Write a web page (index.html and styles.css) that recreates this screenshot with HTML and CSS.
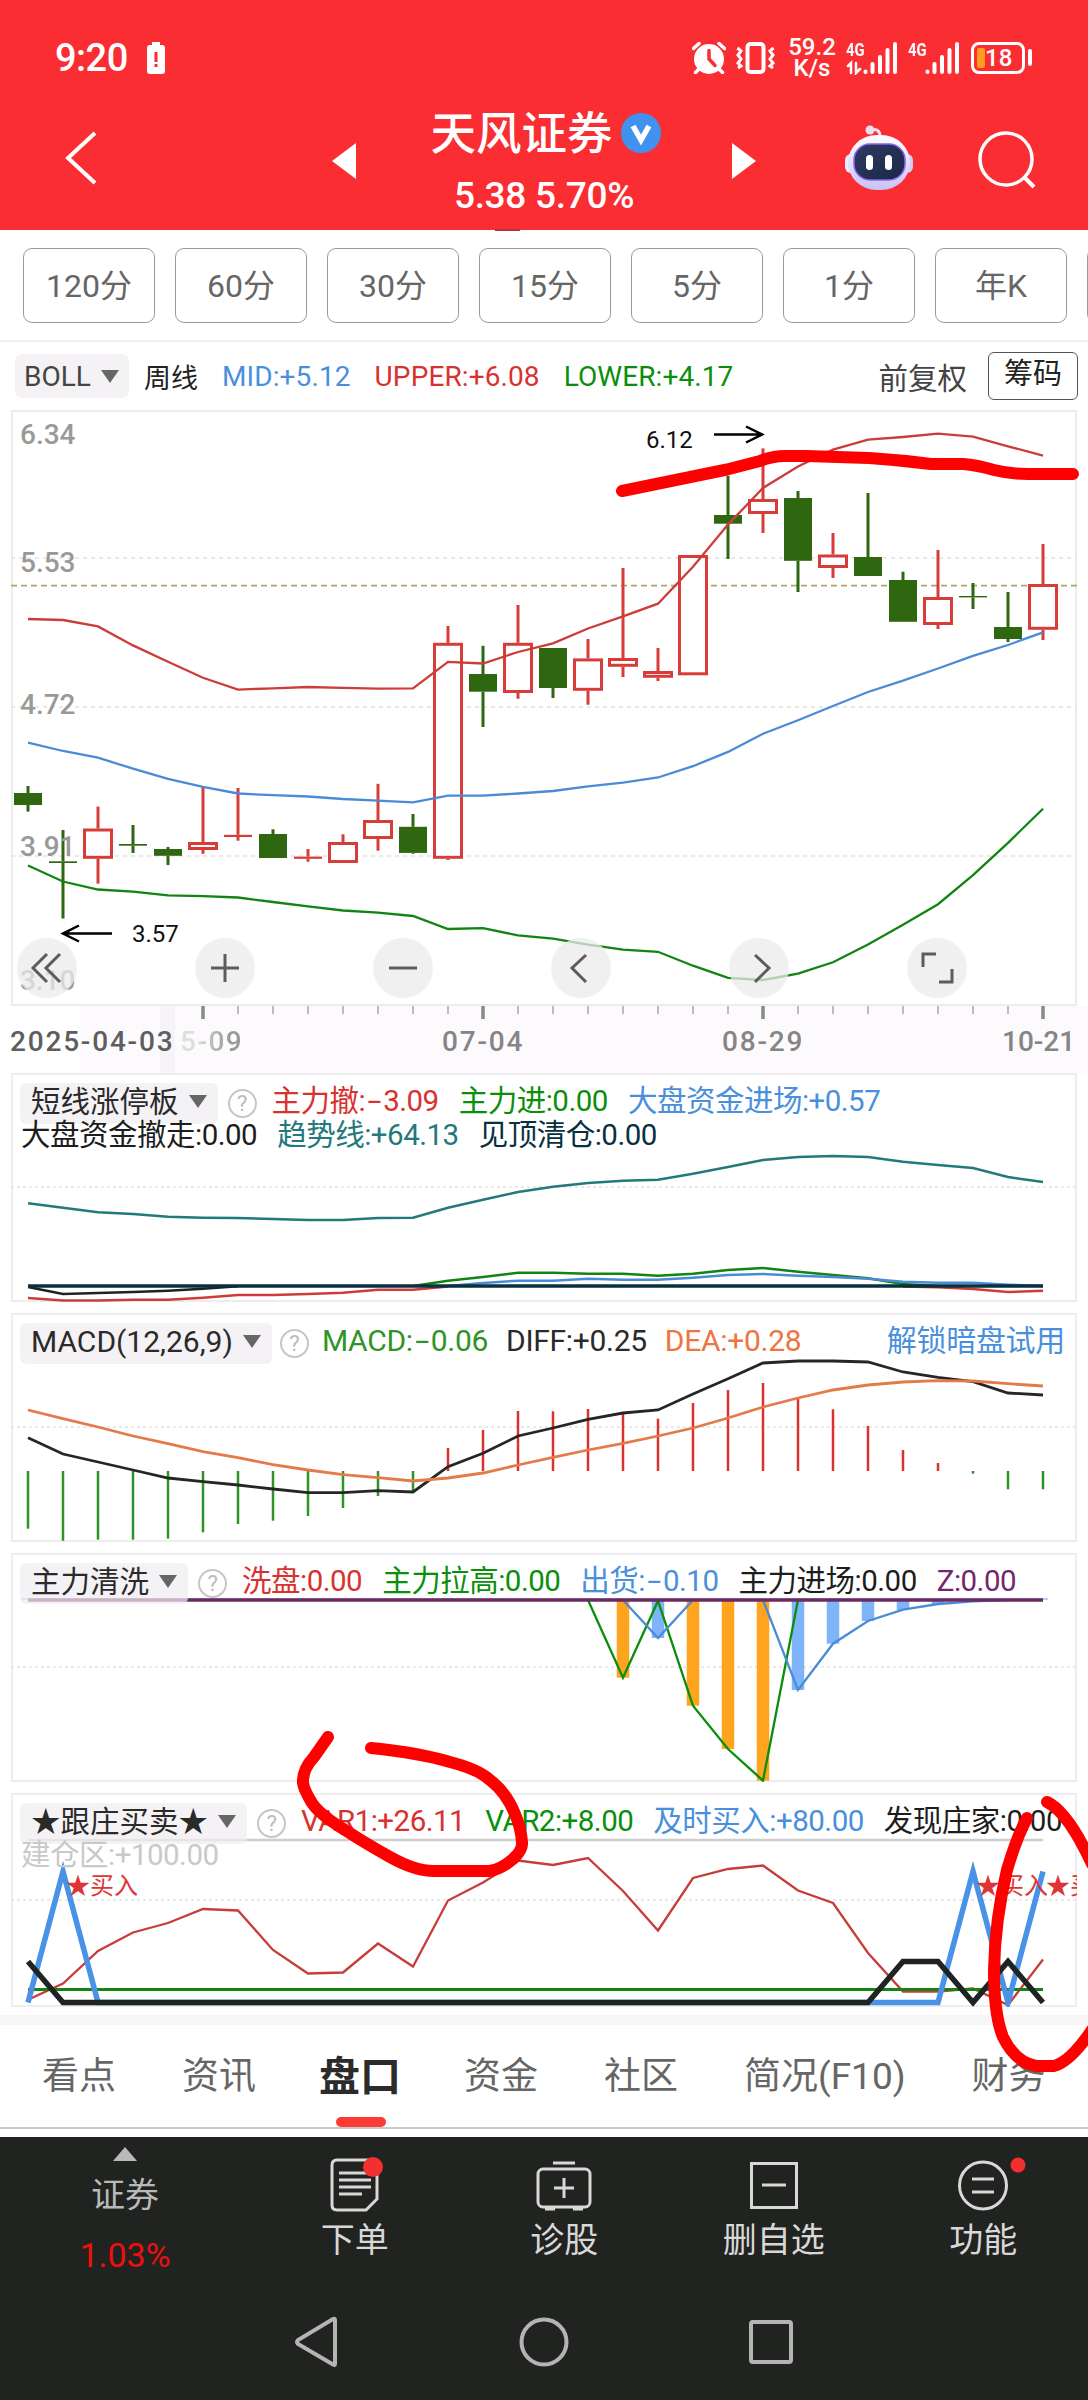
FILE: index.html
```html
<!DOCTYPE html>
<html lang="zh-CN">
<head>
    <meta charset="UTF-8">
    <meta name="viewport" content="width=device-width, initial-scale=1.0">
    <title>天风证券 - 周线</title>
    <link rel="stylesheet" href="styles.css">
</head>
<body>

    <header class="header">
        <!-- 状态栏 -->
        <div class="status-bar">
            <span class="clock">9:20</span>
            <svg class="low-battery" width="18" height="32" viewBox="0 0 18 32">
                <rect x="5" y="0" width="8" height="3" fill="#fff"/>
                <rect x="0" y="3" width="18" height="29" rx="3" fill="#fff"/>
                <rect x="7.5" y="10" width="3" height="10" fill="#fa2d33"/>
                <rect x="7.5" y="22" width="3" height="3" fill="#fa2d33"/>
            </svg>
            <div class="status-right">
                <svg width="34" height="32" viewBox="0 0 34 32">
                    <circle cx="17" cy="17" r="15" fill="#fff"/>
                    <path d="M1.500 6.500L7 1.500M32.500 6.500L27 1.500M7 27L3.500 30.500M27 27L30.500 30.500" stroke="#fff" stroke-width="3.500" stroke-linecap="round"/>
                    <path d="M17 8.500V17L23 23.500" fill="none" stroke="#fa2d33" stroke-width="3.500" stroke-linecap="round"/>
                </svg>
                <svg class="vibrate" width="40" height="32" viewBox="0 0 40 32" fill="none" stroke="#fff">
                    <rect x="11.500" y="2" width="16" height="28" rx="3" stroke-width="4"/>
                    <path d="M1.500 6L5 9L2 13L5 17L2 21L5 24L2 26M37.500 6L34 9L37 13L34 17L37 21L34 24L37 26" stroke-width="3"/>
                </svg>
                <div class="speed"><span>59.2</span><span>K/s</span></div>
                <div class="signal">
                    <span class="net">4G</span>
                    <svg width="53" height="34" viewBox="0 0 53 34" fill="none" stroke="#fff" stroke-linecap="round">
                        <path d="M2 25L5 22V32M10 22V32L14 28" stroke-width="2.500"/>
                        <path d="M19.500 30.500V31M26.500 23V31M34 16V31M41.500 9V31M49 3V31" stroke-width="4"/>
                    </svg>
                </div>
                <div class="signal second">
                    <span class="net">4G</span>
                    <svg width="53" height="34" viewBox="0 0 53 34" fill="none" stroke="#fff" stroke-linecap="round">
                        <path d="M19.500 30.500V31M26.500 23V31M34 16V31M41.500 9V31M49 3V31" stroke-width="4"/>
                    </svg>
                </div>
                <div class="battery"><i></i><span>18</span></div>
                <span class="battery-nub"></span>
            </div>
        </div>

        <!-- 标题栏 -->
        <div class="title-bar">
            <svg class="back" width="34" height="56" viewBox="0 0 34 56"><path d="M31 3L4 28L31 53" fill="none" stroke="#fff" stroke-width="4"/></svg>
            <svg class="prev" width="24" height="36" viewBox="0 0 24 36"><path d="M24 0V36L0 18Z" fill="#fff"/></svg>
            <div class="stock">
                <div class="stock-name">天风证券
                    <svg width="40" height="40" viewBox="0 0 40 40"><circle cx="20" cy="20" r="20" fill="#4191ee"/><path d="M12 13L20 27L28 13" fill="none" stroke="#fff" stroke-width="5.500"/></svg>
                </div>
                <div class="stock-price">5.38 5.70%</div>
            </div>
            <svg class="next" width="24" height="36" viewBox="0 0 24 36"><path d="M0 0V36L24 18Z" fill="#fff"/></svg>
            <svg class="robot" width="70" height="66" viewBox="0 0 70 66">
                <defs>
                    <linearGradient id="shell" x1="0" y1="0" x2="0" y2="1"><stop offset="0" stop-color="#fff"/><stop offset="1" stop-color="#c6c2f7"/></linearGradient>
                    <linearGradient id="face" x1="0" y1="0" x2="1" y2="1"><stop offset="0" stop-color="#2f3a63"/><stop offset="1" stop-color="#1b2745"/></linearGradient>
                </defs>
                <path d="M26 5C33 3 36 6 36 12" fill="none" stroke="#f3dff0" stroke-width="3"/>
                <circle cx="26" cy="5" r="4.500" fill="#f0dcf0"/>
                <rect x="1" y="29" width="12" height="19" rx="6" fill="#efeafc"/>
                <rect x="57" y="29" width="12" height="19" rx="6" fill="#d5cdf8"/>
                <rect x="4" y="10" width="62" height="55" rx="29" fill="url(#shell)"/>
                <rect x="10" y="19" width="51" height="36" rx="16" fill="url(#face)" stroke="#8a63f0" stroke-width="1.500"/>
                <rect x="22" y="30" width="7" height="15" rx="3.500" fill="#fff"/>
                <rect x="41" y="30" width="7" height="15" rx="3.500" fill="#fff"/>
            </svg>
            <svg class="search" width="60" height="60" viewBox="0 0 60 60" fill="none" stroke="#fff">
                <circle cx="28" cy="29" r="26" stroke-width="3.500"/>
                <path d="M46 47L56 57" stroke-width="4"/>
            </svg>
        </div>
        <span class="header-mark"></span>
    </header>

    <!-- 周期选择 -->
    <nav class="periods">
        <span>120分</span>
        <span>60分</span>
        <span>30分</span>
        <span>15分</span>
        <span>5分</span>
        <span>1分</span>
        <span>年K</span>
        <span></span>
    </nav>

    <div class="main-legend">
        <span class="chip boll">BOLL<i class="caret"></i></span>
        <span class="week">周线</span>
        <span class="val blue">MID:+5.12</span>
        <span class="val red">UPPER:+6.08</span>
        <span class="val green">LOWER:+4.17</span>
        <span class="fuquan">前复权</span>
        <span class="chouma">筹码</span>
    </div>

    <!-- K线主图 -->
    <section class="panel main-chart">
        <svg id="kline" class="plot" width="1066" height="596" viewBox="11 410 1066 596"></svg>
        <div class="scale">
            <span>6.34</span>
            <span>5.53</span>
            <span>4.72</span>
            <span>3.91</span>
            <span>3.10</span>
        </div>
        <div class="controls">
            <span><svg viewBox="0 0 60 60"><path d="M30 16L16 30L30 44M43 16L29 30L43 44"/></svg></span>
            <span><svg viewBox="0 0 60 60"><path d="M16 30H44M30 16V44"/></svg></span>
            <span><svg viewBox="0 0 60 60"><path d="M16 30H44"/></svg></span>
            <span><svg viewBox="0 0 60 60"><path d="M35 17L21 30L35 44"/></svg></span>
            <span><svg viewBox="0 0 60 60"><path d="M26 17L40 30L26 44"/></svg></span>
            <span><svg viewBox="0 0 60 60"><path d="M16 29V16H29M32 44H45V31"/></svg></span>
        </div>
    </section>

    <div class="axis">
        <svg id="ticks" width="1088" height="14" viewBox="0 0 1088 14"></svg>
        <div class="dates">
            <span class="d-start">2025-04-03</span>
            <span class="d-covered">5-09</span>
            <span class="d-jul">07-04</span>
            <span class="d-aug">08-29</span>
            <span class="d-oct">10-21</span>
        </div>
    </div>

    <!-- 指标副图 -->
    <section class="panel">
        <svg id="duanxian" class="plot" width="1066" height="229" viewBox="11 0 1066 229"></svg>
        <div class="legend">
            <span class="chip">短线涨停板<i class="caret"></i></span><i class="help">?</i>
            <span class="red">主力撤:<i class="minus">-</i>3.09</span>
            <span class="green">主力进:0.00</span>
            <span class="blue">大盘资金进场:+0.57</span>
        </div>
        <div class="legend row2">
            <span class="black">大盘资金撤走:0.00</span>
            <span class="teal">趋势线:+64.13</span>
            <span class="navy">见顶清仓:0.00</span>
        </div>
    </section>

    <section class="panel">
        <svg id="macd" class="plot" width="1066" height="229" viewBox="11 0 1066 229"></svg>
        <div class="legend latin">
            <span class="chip">MACD(12,26,9)<i class="caret"></i></span><i class="help">?</i>
            <span class="leaf">MACD:<i class="minus">-</i>0.06</span>
            <span class="dark">DIFF:+0.25</span>
            <span class="orange">DEA:+0.28</span>
            <span class="blue unlock">解锁暗盘试用</span>
        </div>
    </section>

    <section class="panel">
        <svg id="qingxi" class="plot" width="1066" height="229" viewBox="11 0 1066 229"></svg>
        <div class="legend">
            <span class="chip">主力清洗<i class="caret"></i></span><i class="help">?</i>
            <span class="red">洗盘:0.00</span>
            <span class="green">主力拉高:0.00</span>
            <span class="blue">出货:<i class="minus">-</i>0.10</span>
            <span class="black">主力进场:0.00</span>
            <span class="purple">Z:0.00</span>
        </div>
    </section>

    <section class="panel short">
        <svg id="genzhuang" class="plot" width="1066" height="214" viewBox="11 0 1066 214"></svg>
        <div class="legend">
            <span class="chip">★跟庄买卖★<i class="caret"></i></span><i class="help">?</i>
            <span class="red">VAR1:+26.11</span>
            <span class="green">VAR2:+8.00</span>
            <span class="blue">及时买入:+80.00</span>
            <span class="black">发现庄家:0.00</span>
        </div>
        <div class="legend row2">
            <span class="pale">建仓区:+100.00</span>
        </div>
    </section>

    <!-- 内容标签 -->
    <nav class="tabs">
        <span>看点</span>
        <span>资讯</span>
        <span class="active">盘口</span>
        <span>资金</span>
        <span>社区</span>
        <span>简况(F10)</span>
        <span>财务</span>
    </nav>

    <!-- 底部工具栏 -->
    <footer class="footer">
        <div class="tools">
            <div class="tool index">
                <i class="up"></i>
                <span>证券</span>
                <b>1.03%</b>
            </div>
            <div class="tool">
                <svg width="60" height="56" viewBox="0 0 60 56" fill="none" stroke="#d8d8d8" stroke-width="3">
                    <path d="M12 3H46Q52 3 52 9V42L41 53H12Q7 53 7 48V8Q7 3 12 3Z"/>
                    <path d="M14 16H44M14 23H46M14 30H46M14 37H37"/>
                    <circle cx="48" cy="10" r="10" fill="#f23030" stroke="none"/>
                </svg>
                <span>下单</span>
            </div>
            <div class="tool">
                <svg width="60" height="56" viewBox="0 0 60 56" fill="none" stroke="#d8d8d8" stroke-width="3">
                    <rect x="4" y="12" width="52" height="38" rx="5"/>
                    <path d="M19 6H41M30 21V41M20 31H40M11 52H21M39 52H49"/>
                </svg>
                <span>诊股</span>
            </div>
            <div class="tool">
                <svg width="60" height="56" viewBox="0 0 60 56" fill="none" stroke="#d8d8d8" stroke-width="3">
                    <rect x="7.500" y="6.500" width="45" height="44"/>
                    <path d="M18 28H42"/>
                </svg>
                <span>删自选</span>
            </div>
            <div class="tool">
                <svg class="wide" width="88" height="56" viewBox="-14 0 88 56" fill="none" stroke="#d8d8d8" stroke-width="3">
                    <circle cx="30" cy="28.500" r="23.500"/>
                    <path d="M19 22H41M19 35H41"/>
                    <circle cx="65" cy="8" r="7.500" fill="#f23030" stroke="none"/>
                </svg>
                <span>功能</span>
            </div>
        </div>
        <div class="sysnav">
            <svg width="48" height="54" viewBox="0 0 48 54"><path d="M42 5V49Q42 51 40 49.500L5 29Q3 27 5 25L40 4Q42 3 42 5Z"/></svg>
            <svg width="54" height="54" viewBox="0 0 54 54"><circle cx="27" cy="27" r="22.500"/></svg>
            <svg width="48" height="54" viewBox="0 0 48 54"><rect x="4" y="7" width="40" height="40" rx="2"/></svg>
        </div>
    </footer>

    <!-- 手绘标注 -->
    <svg class="marker" width="1088" height="2400" viewBox="0 0 1088 2400">
        <path d="M622 491L727 469.500L760 461Q772 456 785 456L806 456L869 458Q900 460 931 464L963 464Q977 465 994 470Q1010 474 1028 474L1073 474"/>
        <path d="M328 1737L314 1757Q302 1770 303 1783Q304 1790 312 1803Q320 1815 345 1830Q365 1843 390 1857Q415 1871 434 1871H489Q500 1870 513 1859Q523 1850 522 1842Q521 1828 515 1814Q506 1792 490 1780Q478 1769 450 1762Q420 1753 371 1748"/>
        <path d="M1027 1818Q1017 1836 1007 1870Q995 1920 994 1970Q994 2015 1003 2037Q1015 2062 1036 2066H1054Q1070 2062 1092 2030M1047 1802Q1068 1812 1092 1864"/>
    </svg>

    <script src="chart.js"></script>
</body>
</html>
```
FILE: styles.css
```css
* {
    box-sizing: border-box;
}

body {
    margin: 0;
    width: 1088px;
    height: 2400px;
    position: relative;
    overflow: hidden;
    background-color: #fff;
    color: #222;
    font-family: Roboto, "Noto Sans CJK SC", sans-serif;
}

i, b {
    font-style: normal;
    font-weight: normal;
}

svg {
    display: block;
    flex: none;
}

.red { color: #d8322f; }
.green { color: #0a8f0a; }
.blue { color: #4a8fdc; }
.black { color: #1d1d1d; }
.dark { color: #2a2a2a; }
.teal { color: #23797c; }
.navy { color: #08303f; }
.leaf { color: #2f9426; }
.orange { color: #ee7440; }
.purple { color: #74256e; }
.pale { color: #c9c9c9; }

/* 顶部 */
.header {
    position: relative;
    height: 230px;
    background-color: #fa2d33;
    color: #fff;
}

.status-bar {
    display: flex;
    align-items: center;
    height: 86px;
    padding: 29px 56px 0 55px;
}

.clock {
    font-size: 38px;
    font-weight: 500;
    letter-spacing: -0.5px;
    width: 92px;
}

.status-right {
    display: flex;
    align-items: center;
    margin-left: auto;
}

.vibrate {
    margin-left: 10px;
}

.speed {
    display: flex;
    flex-direction: column;
    align-items: center;
    width: 46px;
    margin: 0 11px 0 13px;
    font-size: 24px;
    font-weight: 500;
    line-height: 21px;
}

.signal {
    display: grid;
}

.signal > * {
    grid-area: 1 / 1;
}

.signal.second {
    margin: 0 10px 0 9px;
}

.net {
    font-size: 19px;
    line-height: 17px;
    font-weight: 700;
    transform: scaleX(0.78);
    transform-origin: left;
}

.battery {
    display: flex;
    align-items: center;
    width: 54px;
    height: 32px;
    padding-left: 3px;
    border: 3px solid #fff;
    border-radius: 8px;
    font-size: 24px;
    font-weight: 500;
}

.battery i {
    width: 8px;
    height: 20px;
    border-radius: 2px;
    background-color: #ff9c1c;
}

.battery-nub {
    width: 4px;
    height: 17px;
    margin-left: 3px;
    border-radius: 2px;
    background-color: #fff;
}

.title-bar {
    display: flex;
    height: 144px;
    padding-left: 64px;
}

.back {
    margin-top: 44px;
}

.prev {
    margin: 57px 0 0 234px;
}

.stock {
    width: 376px;
    text-align: center;
}

.stock-name {
    display: flex;
    justify-content: center;
    align-items: center;
    gap: 8px;
    height: 66px;
    margin-top: 12px;
    padding-left: 3px;
    padding-bottom: 2px;
    font-size: 45.5px;
    font-weight: 500;
}

.stock-name svg {
    margin-top: 5px;
}

.stock-price {
    margin-top: 2px;
    font-size: 37px;
    font-weight: 500;
    line-height: 60px;
    letter-spacing: -0.3px;
}

.next {
    margin-top: 57px;
}

.robot {
    margin: 39px 0 0 88px;
}

.search {
    margin: 44px 0 0 64px;
}

.header-mark {
    position: absolute;
    left: 495px;
    bottom: -1px;
    width: 25px;
    height: 2px;
    background-color: #b8343a;
}

/* 周期 */
.periods {
    display: flex;
    gap: 20px;
    height: 112px;
    padding: 18px 0 0 23px;
    border-bottom: 2px solid #efefef;
    overflow: hidden;
}

.periods span {
    flex: none;
    width: 132px;
    height: 75px;
    border: 1.5px solid #9a9a9a;
    border-radius: 9px;
    color: #666;
    font-size: 32px;
    line-height: 74px;
    text-align: center;
}

.chip {
    display: flex;
    align-items: center;
    height: 41px;
    padding: 0 11px;
    border-radius: 6px;
    background-color: rgba(241, 236, 241, 0.7);
    color: #2a2a2a;
    letter-spacing: 0;
}

.caret {
    margin-left: 10px;
    border: 9px solid transparent;
    border-top: 13px solid #666;
    border-bottom: 0;
}

.main-legend {
    display: flex;
    align-items: center;
    height: 68px;
    padding: 0 10px 0 15px;
    font-size: 28px;
}

.main-legend .chip {
    height: 44px;
    padding: 0 9px;
    width: 114px;
    margin-right: 15px;
    color: #444;
}

.week {
    width: 78px;
    font-size: 27px;
}

.val {
    margin-right: 24px;
    letter-spacing: 0.1px;
}

.fuquan {
    margin-left: auto;
    margin-right: 21px;
    color: #444;
    font-size: 29.5px;
}

.chouma {
    width: 90px;
    height: 48px;
    border: 1.5px solid #555;
    border-radius: 6px;
    font-size: 29px;
    line-height: 43px;
    text-align: center;
}

/* 图表 */
.panel {
    display: grid;
    grid-template-columns: 1066px;
    position: relative;
    width: 1066px;
    height: 229px;
    margin: 0 0 11px 11px;
    overflow: hidden;
    background-color: #fff;
    box-shadow: inset 0 0 0 2px #ededed;
}

.panel > * {
    grid-area: 1 / 1;
}

.main-chart {
    height: 596px;
    margin-bottom: 0;
}

.panel.short {
    height: 214px;
    margin-bottom: 8px;
}

.scale {
    display: flex;
    flex-direction: column;
    gap: 108px;
    padding: 8px 9px 0;
    color: #999;
    font-size: 28px;
    font-weight: 500;
    line-height: 34px;
}

.scale span:first-child {
    margin-bottom: -14px;
}

.scale span:last-child {
    margin-top: -8px;
}

.controls {
    display: flex;
    align-self: end;
    gap: 118px;
    padding: 0 0 8px 6px;
}

.controls span {
    width: 60px;
    height: 60px;
    border-radius: 50%;
    background-color: rgba(235, 235, 235, 0.75);
}

.controls path {
    fill: none;
    stroke: #5c5c5c;
    stroke-width: 3;
}

.axis {
    height: 67px;
    background: linear-gradient(#fff, #fff) 0 0 / 80px 100% no-repeat, linear-gradient(#f7f4f7, #f7f4f7) 160px 0 / 15px 100% no-repeat, #fdfafd;
}

.dates {
    display: flex;
    padding-left: 10px;
    color: #858585;
    font-size: 28px;
    font-weight: 500;
    line-height: 44px;
    white-space: nowrap;
}

.d-start {
    width: 170px;
    color: #5e5e5e;
    letter-spacing: 1.8px;
}

.d-covered {
    width: 262px;
    letter-spacing: 1.5px;
    background: linear-gradient(90deg, #ddd 15px, #999 50px);
    background-clip: text;
    color: transparent;
}

.d-jul, .d-aug {
    width: 280px;
    letter-spacing: 1.8px;
}

.legend {
    display: flex;
    align-items: center;
    gap: 20px;
    height: 42px;
    margin-top: 9px;
    padding: 0 12px 0 9px;
    font-size: 29.5px;
    line-height: 36px;
    letter-spacing: -0.5px;
    white-space: nowrap;
}

.legend > span:not(.chip) {
    padding-bottom: 4px;
}

.legend .chip {
    padding-bottom: 3px;
}

.legend.latin {
    gap: 18px;
    font-size: 30px;
    letter-spacing: -0.3px;
}

.legend.row2 {
    margin-top: 43px;
    padding-left: 10px;
}

.minus {
    display: inline-block;
    width: 18px;
    text-align: center;
    transform: scaleX(1.7);
}

.help {
    flex: none;
    width: 29px;
    height: 29px;
    margin: 0 -5px 0 -10px;
    border: 2px solid #c6c6c6;
    border-radius: 50%;
    color: #bbb;
    font-size: 22px;
    line-height: 25px;
    text-align: center;
}

.unlock {
    margin-left: auto;
}

.buy {
    fill: #e03434;
    font-size: 24px;
}

.extreme {
    fill: #111;
    font-size: 24px;
}

/* 标签 */
.tabs {
    display: flex;
    align-items: center;
    gap: 66px;
    height: 114px;
    padding: 0 0 6px 42px;
    border-top: 10px solid #f6f6f6;
    border-bottom: 2px solid #c9c9c9;
    color: #666;
    font-size: 37px;
    white-space: nowrap;
}

.tabs .active {
    position: relative;
    margin: 0 -3px;
    color: #2b2b2b;
    font-size: 41px;
    font-weight: 700;
}

.tabs .active::after {
    content: "";
    position: absolute;
    left: 17px;
    bottom: -24px;
    width: 50px;
    height: 10px;
    border-radius: 5px;
    background-color: #fb3b35;
}

/* 底部 */
.footer {
    height: 264px;
    margin-top: 8px;
    background-color: #20231f;
    color: #d8d8d8;
}

.tools {
    display: flex;
    height: 150px;
}

.tool {
    display: flex;
    flex-direction: column;
    align-items: center;
    width: 209.5px;
    padding-top: 20px;
    font-size: 34px;
    line-height: 54px;
}

.tool.index {
    width: 250px;
    padding-top: 10px;
    color: #b9b9b9;
}

.up {
    margin-bottom: 7px;
    border: 12px solid transparent;
    border-top: 0;
    border-bottom: 14px solid #b9b9b9;
}

.tool b {
    margin-top: 6px;
    color: #ee0f0f;
}

.sysnav {
    display: flex;
    justify-content: center;
    gap: 176px;
    padding-top: 28px;
}

.sysnav svg {
    fill: none;
    stroke: #b4b4b4;
    stroke-width: 4;
}

.marker {
    position: absolute;
    left: 0;
    top: 0;
    fill: none;
    stroke: #fe0000;
    stroke-width: 12;
    stroke-linecap: round;
    stroke-linejoin: round;
}
```
FILE: chart.js
```js
const RED = '#d83c38';
const GREEN = '#2f6610';
const STEP = 35;
const x = i => 28 + STEP * i;
const el = id => document.getElementById(id);

function add(id, markup) {
    el(id).insertAdjacentHTML('beforeend', markup);
}

// 从第 from 根K线开始画折线
function line(id, color, width, data, from = 0) {
    const pts = data.map((v, k) => `${x(from + k)},${v}`).join(' ');
    add(id, `<polyline points="${pts}" fill="none" stroke="${color}" stroke-width="${width}"/>`);
}

function grid(id, y, dash = '4 4') {
    add(id, `<line x1="11" y1="${y}" x2="1077" y2="${y}" stroke="#e2e2e2" stroke-width="1.5" stroke-dasharray="${dash}"/>`);
}

function bar(id, i, y1, y2, color, width) {
    add(id, `<rect x="${x(i) - width / 2}" y="${Math.min(y1, y2)}" width="${width}" height="${Math.abs(y2 - y1)}" fill="${color}"/>`);
}

// K线: [高, 实体上, 实体下, 低, 涨]
const candles = [
    [786, 793, 805, 811.6, 0], [830, 861.3, 863, 918.5, 0], [806.6, 828.5, 858.8, 883.6, 1],
    [825, 844, 845.7, 853, 0], [847, 849, 855.8, 865, 0], [787, 842, 850, 853.7, 1],
    [788, 834.8, 837, 840.7, 1], [829.3, 834, 858, 858, 0], [849, 856.6, 858.8, 861.7, 1],
    [834.3, 842, 863, 863, 1], [783.8, 820, 839, 850.7, 1], [814, 826.8, 852.9, 853.7, 0],
    [626, 642.8, 858.8, 860, 1], [645.8, 674, 691.7, 727, 0], [605, 642.8, 693, 698.8, 1],
    [648, 648, 688, 698, 0], [639, 658.4, 690.8, 704.7, 1], [568, 658, 666.8, 677, 1],
    [648, 671, 677.8, 681, 1], [555, 555, 675.3, 675.3, 1], [475.8, 515, 523.7, 559, 0],
    [448.4, 499, 514, 533, 1], [491, 498, 560.8, 592, 0], [533, 554.5, 568, 578, 1],
    [493, 557, 576, 576, 0], [571.7, 580, 621.8, 621.8, 0], [550, 597, 625, 629, 1],
    [583, 596, 597.4, 609, 0], [592, 627, 639, 642, 0], [544, 584, 629.8, 640, 1]
];

[558, 707, 856].forEach(y => grid('kline', y));
add('kline', '<line x1="11" y1="585.6" x2="1077" y2="585.6" stroke="#b5a468" stroke-width="1.6" stroke-dasharray="6 4"/>');

candles.forEach(([high, top, bottom, low, up], i) => {
    const color = up ? RED : GREEN;
    bar('kline', i, high, top, color, 3);
    bar('kline', i, bottom, low, color, 3);
    if (up && bottom - top > 4) {
        add('kline', `<rect x="${x(i) - 13.5}" y="${top + 1.5}" width="27" height="${bottom - top - 3}" fill="#fff" stroke="${color}" stroke-width="3"/>`);
    } else {
        bar('kline', i, top, bottom, color, 28);
    }
});

line('kline', '#cc3c3a', 2.3, [619, 620, 626.4, 645.4, 661.8, 677.8, 689.6, 688.3, 687, 687.9, 688.7, 688.3, 661.8, 663.5, 652, 643.3, 628.5, 616.3, 603.7, 566.7, 524.6, 488, 466.5, 449.7, 439.6, 437, 433.7, 436.6, 446.3, 455.6]);
line('kline', '#4a8bd8', 2.3, [742.6, 751, 757.7, 768.7, 778.8, 786.8, 793.5, 795.2, 796.5, 799, 800.7, 802.4, 795.6, 795.6, 793.5, 791, 786.4, 782.6, 777.5, 766.2, 751.9, 733.8, 720.3, 706, 692, 680.7, 668.5, 655.9, 645, 632.3]);
line('kline', '#128412', 2.3, [865.5, 881.5, 889.5, 891.6, 895.4, 896.2, 897.5, 902, 906.3, 910.5, 912.6, 916, 929, 928.2, 935.4, 938.7, 944.6, 949.7, 951.8, 965.7, 977.9, 980, 973.7, 962.3, 944.6, 924.8, 904.2, 875.2, 842.8, 808.7]);

add('kline', `
    <text class="extreme" x="132" y="942">3.57</text>
    <path d="M112 933.600H63M79 925.500L63 933.600L79 941.500" fill="none" stroke="#000" stroke-width="2.500"/>
    <text class="extreme" x="646" y="448">6.12</text>
    <path d="M714 434.500H762M746 426.500L762 434.500L746 442.500" fill="none" stroke="#000" stroke-width="2.500"/>
`);

for (let i = 5; i < 30; i++) {
    const major = i % 8 === 5;
    bar('ticks', i, 0, major ? 13 : 8, major ? '#8a8a8a' : '#bbb', major ? 3.5 : 2);
}

// 短线涨停板
grid('duanxian', 114, '3 3');
line('duanxian', '#23797c', 2.5, [130.3, 134.7, 139.3, 141, 143.7, 144.7, 145, 146, 147, 147, 145, 144.7, 134.7, 126.7, 119, 113.7, 110, 107.7, 106.7, 100.7, 94, 87, 84, 83, 84, 88.7, 92, 95, 104, 109]);
line('duanxian', '#cc3c3a', 2.5, [225, 227.5, 227.5, 226.7, 226.7, 224.7, 222, 222, 221, 219.7, 216.7, 216.7, 213.5]);
line('duanxian', '#cc3c3a', 2.5, [213.5, 214.3, 216, 219, 217.7], 25);
line('duanxian', '#128412', 2.5, [213, 207.7, 204, 199.7, 199.7, 200.7, 200.7, 202.7, 200.7, 197, 195, 198.7, 202, 205.3, 211, 213], 11);
line('duanxian', '#4a8bd8', 2.5, [213, 210, 207.7, 207.7, 205.7, 206.7, 206.7, 204.7, 202, 201, 202.7, 204, 205.7, 208.7, 209.7, 209.7, 211.7, 213], 12);
line('duanxian', '#222', 2.5, [214, 221, 220, 219, 217.7, 215.7, 213.3]);
line('duanxian', '#08303f', 3.5, new Array(30).fill(213));

// MACD
const macd = [215.7, 227.7, 226.7, 226.7, 225.7, 219.3, 211, 207.7, 203, 195, 183, 179, 135, 117, 98, 98.3, 96, 100, 105.7, 90, 77, 70, 85, 96.3, 113, 137, 150, 160.7, 176.3, 176.3];
grid('macd', 114, '3 3');
macd.forEach((v, i) => bar('macd', i, 158, v, v > 158 ? '#2f9426' : '#d83330', 2.5));
line('macd', '#262626', 2.8, [124.7, 141, 149, 157, 165, 168.7, 172, 176, 179.7, 179.7, 177.7, 179, 153.7, 140.3, 123, 115, 106.3, 100, 97, 81, 65.7, 50, 48, 48, 49, 59, 64.3, 68.7, 80, 82]);
line('macd', '#e57a49', 2.8, [97, 105.7, 114, 123, 130.7, 138.7, 144.7, 151.7, 157, 161.7, 164.7, 168, 165, 160, 152, 144.3, 137, 130.3, 123, 115, 105, 94, 85, 77, 72, 69, 67.7, 68, 70.7, 73]);

// 主力清洗
grid('qingxi', 114, '3 3');
[[17, 124.7], [19, 152.7], [20, 196], [21, 227.7]].forEach(([i, v]) => bar('qingxi', i, 47, v, '#ffa41f', 12.5));
[[18, 85], [22, 137], [23, 90.7], [24, 68], [25, 57], [26, 51], [27, 49]].forEach(([i, v]) => bar('qingxi', i, 47, v, '#7fb3fa', 12.5));
line('qingxi', '#0a8f0a', 2.3, [47, 124.7, 48, 152.7, 196, 227.7, 47], 16);
line('qingxi', '#4a8bd8', 2.3, [47, 85, 47], 17);
line('qingxi', '#4a8bd8', 2.3, [47, 137, 90.7, 68, 56.7, 51, 48.3, 47], 21);
add('qingxi', '<line x1="21" y1="46" x2="1048" y2="46" stroke="#9cc3e8" stroke-width="1.5"/>');
line('qingxi', '#6b2a62', 3.5, new Array(30).fill(47));

// 跟庄买卖
grid('genzhuang', 107, '3 3');
line('genzhuang', '#cfcdcf', 2.5, new Array(30).fill(47));
line('genzhuang', '#c83c3a', 2.3, [206.8, 190.5, 158, 139.5, 130, 116, 117.5, 157, 180.5, 179.5, 150.5, 173.5, 107.5, 89.5, 67.5, 72, 65, 98, 137.5, 85, 76, 72.5, 97.5, 110, 160, 198.5, 198.5, 195.5, 212, 166.5]);
line('genzhuang', '#128412', 3, new Array(30).fill(196.5));
line('genzhuang', '#4a92e8', 5.5, [209.5, 78.5, 209.5, ...new Array(24).fill(209.5), 78.5, 209.5, 78.5]);
line('genzhuang', '#1f2422', 5.5, [168.5, 209.5, ...new Array(23).fill(209.5), 168.5, 168.5, 209.5, 168.5, 209.5]);
[[1, '★买入'], [27, '★买入'], [29, '★买入']].forEach(([i, t]) => {
    add('genzhuang', `<text class="buy" x="${x(i) + 3}" y="101">${t}</text>`);
});
```
